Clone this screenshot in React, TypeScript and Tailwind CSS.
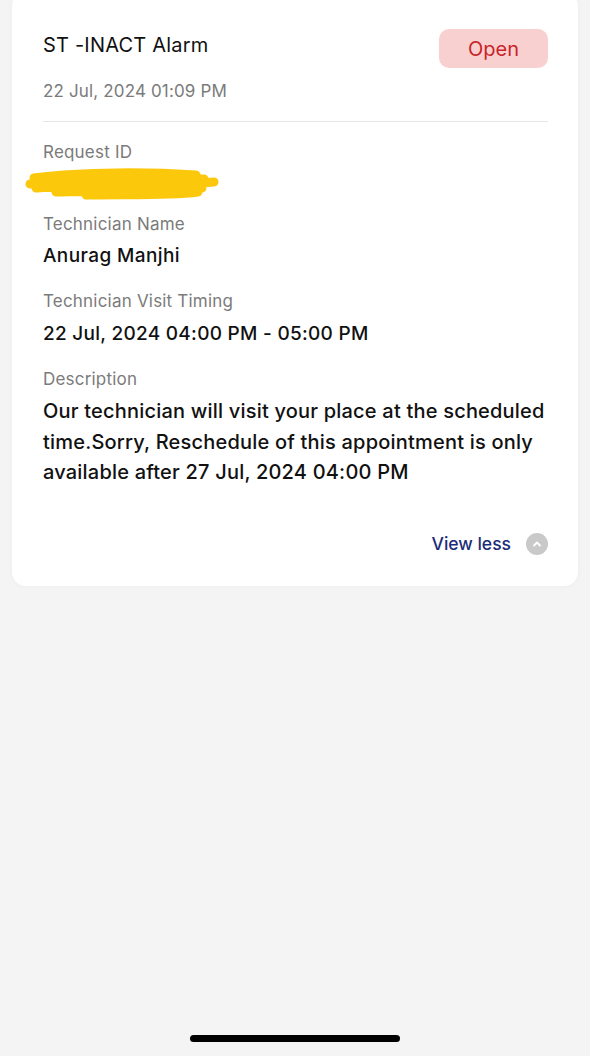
import React from 'react';

const Field = ({ label, children }: { label: string; children: React.ReactNode }) => (
  <div className="flex flex-col">
    <span className="text-[17px] leading-[22px] tracking-[0.2px] text-[#7b7b7b]">{label}</span>
    <div className="mt-[9px]">{children}</div>
  </div>
);

const Scribble = () => (
  <svg width="196" height="32" viewBox="0 0 196 32" className="-ml-[17px] overflow-visible">
    <path
      d="M8 10 C40 5 110 3 170 7 M4 16 C60 11 130 11 178 11 M10 20 C70 16 140 18 188 14 M30 24 C90 22 150 24 176 20 M60 27 C100 26 140 28 172 24"
      stroke="#fbc80c"
      strokeWidth="9"
      strokeLinecap="round"
      fill="none"
    />
  </svg>
);

export default function App() {
  return (
    <div
      className="min-h-[1056px] w-full bg-[#f4f4f4] flex flex-col"
      style={{ fontFamily: 'Inter, "Liberation Sans", sans-serif' }}
    >
      <div className="mx-[12px] -mt-[8px] bg-white rounded-[14px] pl-[31px] pr-[30px] pt-[37px] pb-[29px] shadow-[0_0_6px_rgba(0,0,0,0.03)]">
        <div className="flex justify-between items-start">
          <div className="flex flex-col">
            <span className="text-[20px] leading-[24px] tracking-[0.2px] text-[#111] mt-[4px]">ST -INACT Alarm</span>
            <span className="text-[17px] leading-[22px] tracking-[0.15px] text-[#7b7b7b] mt-[23px]">
              22 Jul, 2024 01:09 PM
            </span>
          </div>
          <span className="w-[109px] h-[39px] rounded-[10px] bg-[#f9d0d0] text-[#c7252a] text-[20px] flex items-center justify-center">
            Open
          </span>
        </div>
        <div className="h-px bg-[#e6e6e6] mt-[19px]" />

        <div className="flex flex-col gap-[22px] mt-[19px]">
          <div className="flex flex-col">
            <span className="text-[17px] leading-[22px] tracking-[0.2px] text-[#7b7b7b]">Request ID</span>
            <div className="mt-[5px] h-[23px]">
              <Scribble />
            </div>
          </div>
          <Field label="Technician Name">
            <span className="text-[19px] leading-[24px] tracking-[0.4px] font-medium text-[#111]">Anurag Manjhi</span>
          </Field>
          <Field label="Technician Visit Timing">
            <span className="text-[19px] leading-[24px] tracking-[0.28px] font-medium text-[#111] mt-[1px] block">
              22 Jul, 2024 04:00 PM - 05:00 PM
            </span>
          </Field>
          <Field label="Description">
            <p className="text-[20px] leading-[30.5px] tracking-[0.2px] font-medium text-[#111] -mt-[3px]">
              Our technician will visit your place at the scheduled time.Sorry, Reschedule of this appointment is only
              available after 27 Jul, 2024 04:00 PM
            </p>
          </Field>
        </div>

        <div className="flex justify-end items-center gap-[15px] mt-[43px]">
          <span className="text-[17.5px] font-medium text-[#1b2d78]">View less</span>
          <span className="w-[22px] h-[22px] rounded-full bg-[#c9c9c9] flex items-center justify-center">
            <svg width="12" height="12" viewBox="0 0 12 12">
              <path d="M3 7.5 L6 4.5 L9 7.5" stroke="#fff" strokeWidth="1.8" fill="none" strokeLinecap="round" strokeLinejoin="round" />
            </svg>
          </span>
        </div>
      </div>

      <div className="flex-1" />
      <div className="flex justify-center pb-[14px]">
        <div className="w-[210px] h-[7px] rounded-full bg-black" />
      </div>
    </div>
  );
}
